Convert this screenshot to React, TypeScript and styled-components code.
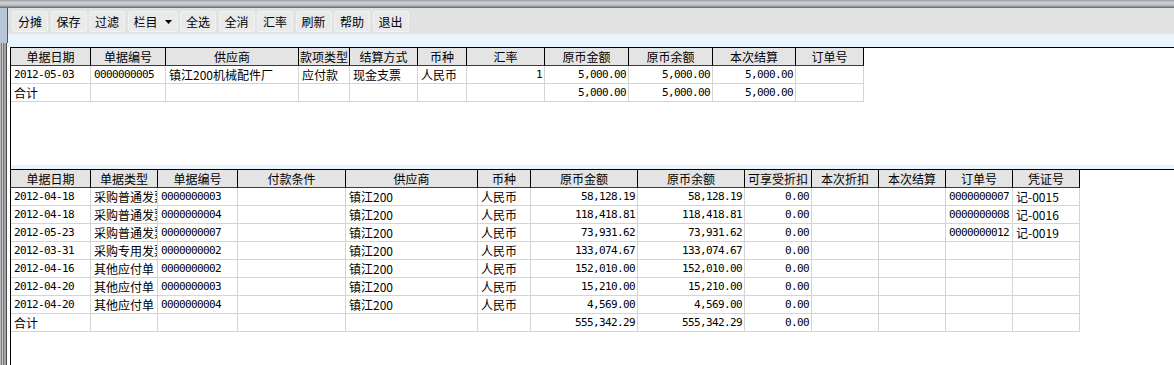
import React from 'react';
import styled, { createGlobalStyle } from 'styled-components';

const GlobalStyle = createGlobalStyle`
  html, body { margin: 0; padding: 0; background: #fff; }
  body {
    width: 1174px; height: 365px; overflow: hidden;
    font-family: "Noto Sans CJK SC", "Noto Sans", sans-serif;
    font-size: 12px; color: #000;
  }
`;

const Window = styled.div`
  width: 1174px; height: 365px; display: flex; flex-direction: column;
  overflow: hidden; background: #fff;
`;

const TitleEdge = styled.div`
  height: 8px; flex: none;
  background: linear-gradient(to bottom, #9ca0a4 0, #d2d5d8 35%, #b4b7ba 70%, #5c6064 100%);
`;

const Body = styled.div`
  flex: 1; display: flex; min-height: 0;
`;

const LeftFrame = styled.div`
  width: 8px; flex: none; display: flex; flex-direction: column;
`;

const FrameTop = styled.div`
  height: 35px; flex: none;
  background: linear-gradient(to right, #b6c5d7 0 7px, #4e565e 7px 8px);
`;

const FrameRest = styled.div`
  flex: 1;
  background: linear-gradient(to right,
    #bcbcbc 0 1px, #7a7a7a 1px 2px, #c8c8c8 2px 3px, #5a78b0 3px 4px,
    #a6a6a6 4px 6px, #464646 6px 7px, #ffffff 7px 8px);
`;

const Main = styled.div`
  flex: 1; display: flex; flex-direction: column; min-width: 0; background: #fff;
`;

const Toolbar = styled.div`
  height: 26px; flex: none; box-sizing: border-box;
  background: #e2e2e2; display: flex; align-items: flex-start;
  padding: 3px 0 0 4px; gap: 2.5px;
`;

const ToolButton = styled.button<{ $wide?: boolean }>`
  width: ${p => (p.$wide ? 50 : 36)}px; height: 21px; flex: none;
  box-sizing: border-box; margin: 0; padding: 0;
  background: #eaeaea; border: 1px solid #f2f2f2; border-radius: 2px;
  font-family: "Noto Sans CJK SC", sans-serif; font-size: 12px; color: #000;
  line-height: 19px; display: flex; align-items: center; justify-content: center; gap: 7px;
`;

const Band = styled.div<{ $h: number }>`
  height: ${p => p.$h}px; flex: none; background: #e9f4fd;
`;

const Panels = styled.div`
  flex: 1; display: flex; flex-direction: column; min-height: 0;
  margin-left: 2px; border-left: 1px solid #000; background: #fff;
`;

const GridPanel = styled.div<{ $h?: number }>`
  ${p => (p.$h ? `height: ${p.$h}px; flex: none;` : 'flex: 1;')}
  box-sizing: border-box; border-top: 1px solid #000; background: #fff; overflow: hidden;
`;

const Splitter = styled.div`
  height: 4px; flex: none; background: #e9f4fd;
`;

const Row = styled.div`
  display: flex; height: 18px;
`;

const HeadCell = styled.div<{ $w: number }>`
  width: ${p => p.$w}px; flex: none; box-sizing: border-box; height: 18px;
  background: #e4e4e4; border-right: 1px solid #000; border-bottom: 1px solid #3c3c3c;
  text-align: center; line-height: 17px; white-space: nowrap; overflow: hidden;
`;

const Cell = styled.div<{ $w: number; $right: boolean; $mono: boolean }>`
  width: ${p => p.$w}px; flex: none; box-sizing: border-box; height: 18px;
  border-right: 1px solid #d4d4d4; border-bottom: 1px solid #d4d4d4;
  padding: 0 2px 0 3px; line-height: 17px; white-space: nowrap; overflow: hidden;
  text-align: ${p => (p.$right ? 'right' : 'left')};
  ${p => (p.$mono
    ? 'font-family: "DejaVu Sans Mono", "Liberation Mono", monospace; font-size: 11px; letter-spacing: -0.62px;'
    : 'font-family: "Noto Sans CJK SC", sans-serif; font-size: 12px;')}
`;

type Col = { title: string; w: number; right?: boolean };

const upperCols: Col[] = [
  { title: '单据日期', w: 80 },
  { title: '单据编号', w: 75 },
  { title: '供应商', w: 133 },
  { title: '款项类型', w: 51 },
  { title: '结算方式', w: 68 },
  { title: '币种', w: 49 },
  { title: '汇率', w: 78, right: true },
  { title: '原币金额', w: 84, right: true },
  { title: '原币余额', w: 84, right: true },
  { title: '本次结算', w: 83, right: true },
  { title: '订单号', w: 68 },
];

const upperRows: string[][] = [
  ['2012-05-03', '0000000005', '镇江200机械配件厂', '应付款', '现金支票', '人民币', '1', '5,000.00', '5,000.00', '5,000.00', ''],
  ['合计', '', '', '', '', '', '', '5,000.00', '5,000.00', '5,000.00', ''],
];

const lowerCols: Col[] = [
  { title: '单据日期', w: 80 },
  { title: '单据类型', w: 67 },
  { title: '单据编号', w: 80 },
  { title: '付款条件', w: 108 },
  { title: '供应商', w: 132 },
  { title: '币种', w: 53 },
  { title: '原币金额', w: 107, right: true },
  { title: '原币余额', w: 107, right: true },
  { title: '可享受折扣', w: 67, right: true },
  { title: '本次折扣', w: 67, right: true },
  { title: '本次结算', w: 67, right: true },
  { title: '订单号', w: 67 },
  { title: '凭证号', w: 67 },
];

const lr = (d: string, t: string, n: string, a: string, o = '', v = ''): string[] =>
  [d, t, n, '', '镇江200', '人民币', a, a, '0.00', '', '', o, v];

const lowerRows: string[][] = [
  lr('2012-04-18', '采购普通发票', '0000000003', '58,128.19', '0000000007', '记-0015'),
  lr('2012-04-18', '采购普通发票', '0000000004', '118,418.81', '0000000008', '记-0016'),
  lr('2012-05-23', '采购普通发票', '0000000007', '73,931.62', '0000000012', '记-0019'),
  lr('2012-03-31', '采购专用发票', '0000000002', '133,074.67'),
  lr('2012-04-16', '其他应付单', '0000000002', '152,010.00'),
  lr('2012-04-20', '其他应付单', '0000000003', '15,210.00'),
  lr('2012-04-20', '其他应付单', '0000000004', '4,569.00'),
  ['合计', '', '', '', '', '', '555,342.29', '555,342.29', '0.00', '', '', '', ''],
];

const isAscii = (s: string) => /^[\x20-\x7e]*$/.test(s);

const Grid: React.FC<{ cols: Col[]; rows: string[][] }> = ({ cols, rows }) => (
  <>
    <Row>
      {cols.map(c => (
        <HeadCell key={c.title} $w={c.w}>{c.title}</HeadCell>
      ))}
    </Row>
    {rows.map((r, i) => (
      <Row key={i}>
        {cols.map((c, j) => (
          <Cell key={j} $w={c.w} $right={!!c.right} $mono={isAscii(r[j])}>{r[j]}</Cell>
        ))}
      </Row>
    ))}
  </>
);

const DropArrow = () => (
  <svg width="7" height="4" viewBox="0 0 7 4">
    <polygon points="0,0 7,0 3.5,4" fill="#000" />
  </svg>
);

const buttons = ['分摊', '保存', '过滤', '栏目', '全选', '全消', '汇率', '刷新', '帮助', '退出'];

export default function App() {
  return (
    <>
      <GlobalStyle />
      <Window>
        <TitleEdge />
        <Body>
          <LeftFrame>
            <FrameTop />
            <FrameRest />
          </LeftFrame>
          <Main>
            <Toolbar>
              {buttons.map(b =>
                b === '栏目' ? (
                  <ToolButton key={b} $wide>
                    <span>{b}</span>
                    <DropArrow />
                  </ToolButton>
                ) : (
                  <ToolButton key={b}>{b}</ToolButton>
                ),
              )}
            </Toolbar>
            <Band $h={13} />
            <Panels>
              <GridPanel $h={118}>
                <Grid cols={upperCols} rows={upperRows} />
              </GridPanel>
              <Splitter />
              <GridPanel>
                <Grid cols={lowerCols} rows={lowerRows} />
              </GridPanel>
            </Panels>
          </Main>
        </Body>
      </Window>
    </>
  );
}
